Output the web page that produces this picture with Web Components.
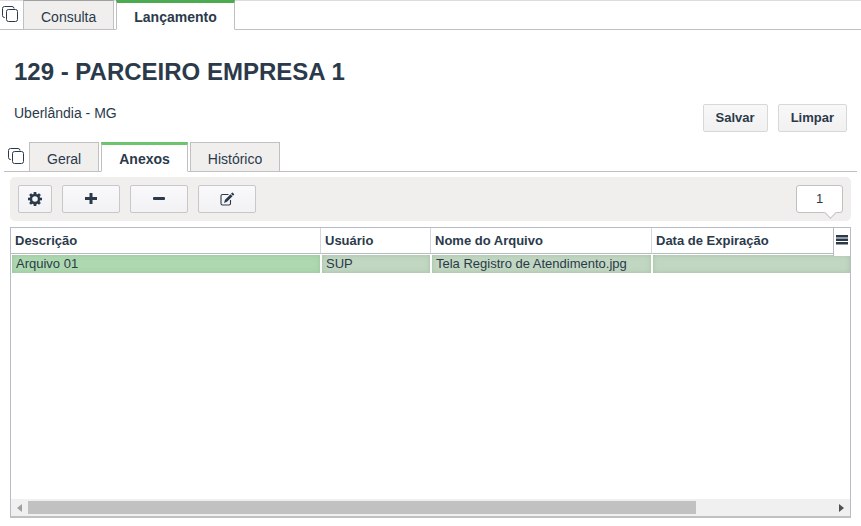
<!DOCTYPE html>
<html lang="pt-BR">
<head>
<meta charset="UTF-8">
<meta name="viewport" content="width=device-width, initial-scale=1">
<title>129 - PARCEIRO EMPRESA 1</title>
<style>
  :root {
    --text-color: #2b3a4a;
    --line-color: #c0c0c0;
    --panel-color: #f0efee;
    --primary-color: #6cc46c;
  }

  body {
    margin: 0;
    background: #fff;
    color: var(--text-color);
    font: 14px/16px "Liberation Sans", Arial, sans-serif;
  }
</style>
</head>
<body>
  <partner-page></partner-page>

<script>
const gearTeeth = [0, 45, 90, 135, 180, 225, 270, 315]
  .map(angle => `<path d="M6.700 1h2.600l.3 3H6.400z" transform="rotate(${angle} 8 8)"/>`)
  .join("");

const icons = {
  gear: `<svg width="16" height="16" viewBox="0 0 16 16"><g fill="currentColor"><path fill-rule="evenodd" d="M8 2.800a5.200 5.200 0 1 0 0 10.400A5.200 5.200 0 0 0 8 2.800zm0 2.400a2.800 2.800 0 1 1 0 5.600 2.800 2.800 0 0 1 0-5.600z"/>${gearTeeth}</g></svg>`,
  plus: `<svg width="16" height="16" viewBox="0 0 16 16"><path d="M8 2v11M2 7.500h12" fill="none" stroke="currentColor" stroke-width="3"/></svg>`,
  minus: `<svg width="16" height="16" viewBox="0 0 16 16"><rect x="2" y="6" width="12" height="3" rx="1" fill="currentColor"/></svg>`,
  edit: `<svg width="16" height="16" viewBox="0 0 16 16"><path d="M9.500 3.500H3.500Q2 3.500 2 5v7.500Q2 14 3.500 14h6.500q1.500 0 1.500-1.500V9" fill="none" stroke="currentColor" stroke-width="1.100"/><path d="M5 12l1-3.300 5.500-5.500 2 2-5.500 5.500zM12 2.700l1-1q.4-.4.8 0l1.200 1.200q.4.400 0 .8l-1 1z" fill="currentColor"/></svg>`,
  windows: `<svg width="16" height="16" viewBox="0 0 16 16"><path d="M3 11.500H2.500Q.5 11.500.5 9.500v-7q0-2 2-2h7.500q2 0 2 2" fill="none" stroke="currentColor"/><rect x="4.500" y="3.500" width="11" height="12" rx="2" fill="#fff" stroke="currentColor"/></svg>`,
  menu: `<svg width="12" height="10" viewBox="0 0 12 10"><path d="M0 0h12v2.500H0zM0 3.500h12v2.500H0zM0 7h12v2.500H0z" fill="currentColor"/></svg>`
};

class TabItem extends HTMLElement {
  constructor () {
    super();
    this.attachShadow({ mode: "open" });
  }

  connectedCallback () {
    const active = this.hasAttribute("active");

    this.shadowRoot.innerHTML = /* html */ `
    <style>
      :host {
        display: flex;
        margin-bottom: -1px;
      }

      button {
        box-sizing: border-box;
        height: 30px;
        padding: 3px 17px 0;
        font: inherit;
        color: inherit;
        background: var(--panel-color);
        border: 1px solid var(--line-color);
        border-top-color: var(--tab-top-color, var(--line-color));
        cursor: pointer;

        &[aria-selected="true"] {
          padding-top: 1px;
          font-weight: bold;
          background: #fff;
          border-top: 3px solid var(--primary-color);
          border-bottom-color: #fff;
        }
      }
    </style>
    <button type="button" role="tab" aria-selected="${active}"><slot></slot></button>
    `;
  }
}

class TabBar extends HTMLElement {
  constructor () {
    super();
    this.attachShadow({ mode: "open" });
  }

  connectedCallback () {
    this.shadowRoot.innerHTML = /* html */ `
    <style>
      :host {
        display: flex;
        align-items: flex-end;
        border-bottom: 1px solid var(--line-color);
      }

      .windows {
        display: flex;
        margin: 0 5px 7px 0;
        padding: 0;
        border: 0;
        color: inherit;
        background: none;
        cursor: pointer;
      }

      .tabs {
        display: flex;
        gap: 2px;
      }
    </style>
    <button class="windows" type="button" aria-label="Abas abertas">${icons.windows}</button>
    <div class="tabs" role="tablist"><slot></slot></div>
    `;
  }
}

class ActionButton extends HTMLElement {
  constructor () {
    super();
    this.attachShadow({ mode: "open" });
  }

  connectedCallback () {
    const icon = this.getAttribute("icon");
    const label = this.getAttribute("label");

    this.shadowRoot.innerHTML = /* html */ `
    <style>
      :host {
        display: flex;
        font-size: 13px;
      }

      button {
        display: flex;
        align-items: center;
        justify-content: center;
        box-sizing: border-box;
        width: 100%;
        height: 28px;
        padding: 0 12px;
        font: inherit;
        font-weight: bold;
        color: inherit;
        background: linear-gradient(#f8f8f8, #f1f1f1);
        border: 1px solid #d8d8d8;
        border-radius: 2px;
        cursor: pointer;

        &.icon {
          padding: 0;
          background: linear-gradient(#f9f9fb, #f2f2f5);
          border-color: #c8c8c8;
        }
      }
    </style>
    <button type="button" class="${icon ? "icon" : ""}" ${label ? `aria-label="${label}"` : ""}>${icon ? icons[icon] : "<slot></slot>"}</button>
    `;
  }
}

class PageCounter extends HTMLElement {
  constructor () {
    super();
    this.attachShadow({ mode: "open" });
  }

  connectedCallback () {
    this.shadowRoot.innerHTML = /* html */ `
    <style>
      :host {
        display: block;
        font-size: 13px;
      }

      button {
        position: relative;
        display: block;
        box-sizing: border-box;
        width: 47px;
        height: 28px;
        padding: 0;
        font: inherit;
        color: inherit;
        background: #fff;
        border: 1px solid var(--line-color);
        border-radius: 3px;
        cursor: pointer;
      }

      /* balloon pointer */
      button::after {
        content: "";
        position: absolute;
        right: 7px;
        bottom: -5px;
        width: 8px;
        height: 8px;
        background: #fff;
        border: solid var(--line-color);
        border-width: 0 1px 1px 0;
        transform: rotate(45deg);
      }
    </style>
    <button type="button"><slot></slot></button>
    `;
  }
}

class ScrollTrack extends HTMLElement {
  constructor () {
    super();
    this.attachShadow({ mode: "open" });
  }

  connectedCallback () {
    this.shadowRoot.innerHTML = /* html */ `
    <style>
      :host {
        display: flex;
        align-items: center;
        height: 17px;
        background: #f0f0f0;
      }

      button {
        display: flex;
        align-items: center;
        justify-content: center;
        width: 17px;
        height: 17px;
        padding: 0;
        border: 0;
        background: none;
        color: #505050;

        &:disabled {
          color: #a0a0a0;
        }
      }

      .track {
        flex: 1;
      }

      .thumb {
        width: 83%;
        height: 13px;
        background: #c1c1c1;
      }
    </style>
    <button type="button" disabled aria-label="Rolar para a esquerda"><svg width="5" height="8" viewBox="0 0 5 8"><path d="M5 0v8L0 4z" fill="currentColor"/></svg></button>
    <div class="track"><div class="thumb"></div></div>
    <button type="button" aria-label="Rolar para a direita"><svg width="5" height="8" viewBox="0 0 5 8"><path d="M0 0v8l5-4z" fill="currentColor"/></svg></button>
    `;
  }
}

class AttachmentGrid extends HTMLElement {
  constructor () {
    super();
    this.attachShadow({ mode: "open" });
  }

  connectedCallback () {
    this.shadowRoot.innerHTML = /* html */ `
    <style>
      :host {
        position: relative;
        display: flex;
        flex-direction: column;
        border: 1px solid #b8bbc4;
        border-bottom: 2px solid var(--line-color);
        font-size: 13px;
      }

      .rows {
        flex: 1;
      }

      table {
        width: 100%;
        table-layout: fixed;
        border-spacing: 0;
      }

      th {
        box-sizing: border-box;
        height: 26px;
        padding: 0 4px;
        text-align: left;
        border-right: 1px solid #d4d7dc;
        border-bottom: 1px solid #b8bbc4;

        &:last-child {
          border-right: 0;
        }
      }

      td {
        box-sizing: border-box;
        height: 20px;
        padding: 0 4px;
        background: #c2d7c2;
        background-clip: padding-box;
        border: 1px solid #fff;
        box-shadow: inset 0 0 5px #8fb08f90;

        &:first-child {
          background-color: #aed9b0;
        }

        &:last-child {
          border-right: 0;
        }
      }

      .description { width: 310px; }
      .user { width: 110px; }
      .file { width: 221px; }

      .menu {
        position: absolute;
        top: 0;
        right: 0;
        display: flex;
        justify-content: center;
        box-sizing: border-box;
        width: 17px;
        height: 28px;
        padding: 7px 0 0;
        color: inherit;
        background: #fff;
        border: 0;
        border-left: 1px solid #b8bbc4;
        cursor: pointer;
      }
    </style>
    <div class="rows">
      <table>
        <colgroup>
          <col class="description"><col class="user"><col class="file"><col>
        </colgroup>
        <thead>
          <tr><th scope="col">Descrição</th><th scope="col">Usuário</th><th scope="col">Nome do Arquivo</th><th scope="col">Data de Expiração</th></tr>
        </thead>
        <tbody>
          <tr><td>Arquivo 01</td><td>SUP</td><td>Tela Registro de Atendimento.jpg</td><td></td></tr>
        </tbody>
      </table>
    </div>
    <button class="menu" type="button" aria-label="Colunas">${icons.menu}</button>
    <scroll-track></scroll-track>
    `;
  }
}

class PartnerPage extends HTMLElement {
  constructor () {
    super();
    this.attachShadow({ mode: "open" });
  }

  connectedCallback () {
    this.shadowRoot.innerHTML = /* html */ `
    <style>
      :host {
        display: flex;
        flex-direction: column;
        box-sizing: border-box;
        min-height: 100vh;
        padding-bottom: 8px;
      }

      .main-tabs {
        padding-left: 2px;
        box-shadow: inset 0 1px #dcdcdc;
        --primary-color: #4caa50;
        --tab-top-color: #a0a0a0;
      }

      .inner-tabs {
        margin: 10px 4px 0;
        padding-left: 4px;
      }

      h1 {
        margin: 28px 14px 0;
        font-size: 24px;
        line-height: 28px;
      }

      .details {
        display: flex;
        justify-content: space-between;
        align-items: flex-start;
        margin: 18px 14px 0;
      }

      p {
        margin: 1px 0 0;
      }

      .actions {
        display: flex;
        gap: 10px;
      }

      .toolbar {
        display: flex;
        gap: 10px;
        margin: 5px 10px 6px;
        padding: 8px;
        background: var(--panel-color);
        border-radius: 5px;

        & action-button {
          width: 58px;
        }

        & action-button:first-child {
          width: 34px;
        }

        & page-counter {
          margin-left: auto;
        }
      }

      attachment-grid {
        flex: 1;
        margin: 0 10px;
      }
    </style>
    <tab-bar class="main-tabs">
      <tab-item>Consulta</tab-item>
      <tab-item active>Lançamento</tab-item>
    </tab-bar>
    <h1>129 - PARCEIRO EMPRESA 1</h1>
    <div class="details">
      <p>Uberlândia - MG</p>
      <div class="actions">
        <action-button>Salvar</action-button>
        <action-button>Limpar</action-button>
      </div>
    </div>
    <tab-bar class="inner-tabs">
      <tab-item>Geral</tab-item>
      <tab-item active>Anexos</tab-item>
      <tab-item>Histórico</tab-item>
    </tab-bar>
    <div class="toolbar">
      <action-button icon="gear" label="Configurar"></action-button>
      <action-button icon="plus" label="Adicionar"></action-button>
      <action-button icon="minus" label="Remover"></action-button>
      <action-button icon="edit" label="Editar"></action-button>
      <page-counter>1</page-counter>
    </div>
    <attachment-grid></attachment-grid>
    `;
  }
}

customElements.define("tab-item", TabItem);
customElements.define("tab-bar", TabBar);
customElements.define("action-button", ActionButton);
customElements.define("page-counter", PageCounter);
customElements.define("scroll-track", ScrollTrack);
customElements.define("attachment-grid", AttachmentGrid);
customElements.define("partner-page", PartnerPage);
</script>
</body>
</html>
